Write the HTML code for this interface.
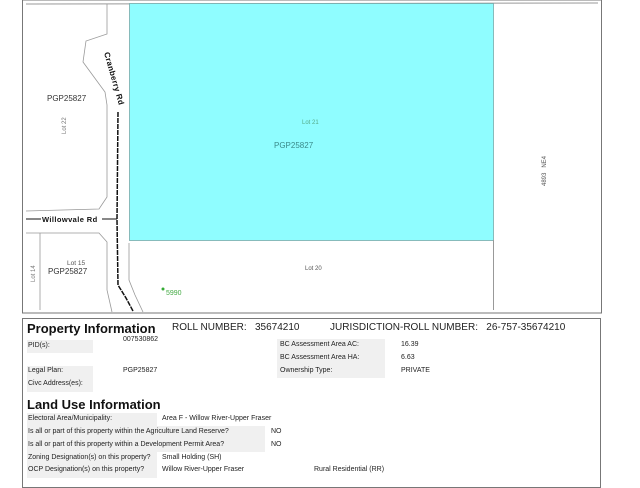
<!DOCTYPE html>
<html><head><style>
body{margin:0;width:640px;height:480px;background:#fff;position:relative;overflow:hidden;font-family:"Liberation Sans",sans-serif;}
.a{position:absolute;white-space:nowrap;font-size:7px;color:#222;}
.g{position:absolute;background:#f0f0f0;}
.h{position:absolute;font-weight:bold;font-size:13px;color:#111;}
.r{position:absolute;font-size:10px;color:#222;white-space:nowrap;}
</style></head><body>
<svg width="640" height="320" style="position:absolute;left:0;top:0" font-family="Liberation Sans, sans-serif">
<rect x="22.5" y="0" width="579" height="313" fill="#fff" stroke="#777" stroke-width="1"/>
<line x1="26" y1="4" x2="598" y2="3" stroke="#999" stroke-width="1"/>
<rect x="129.5" y="3.5" width="364" height="237" fill="#8ffdff" stroke="#7aa" stroke-width="0.8"/>
<line x1="493.5" y1="240" x2="493.5" y2="310" stroke="#999"/>
<polyline points="107,4 107,34 86,41 83,62 105,92 107,105 107,197 99,209 26,211" fill="none" stroke="#999" stroke-width="0.8"/>
<polyline points="26,233 99,233 107,242 107,290 112,312" fill="none" stroke="#999" stroke-width="0.8"/>
<polyline points="40,233 40,310" fill="none" stroke="#999" stroke-width="0.8"/>
<polyline points="129,243 129,280 135,295 143,312" fill="none" stroke="#999" stroke-width="0.8"/>
<polyline points="118,112 117,220 118,285 126,298 133,311" fill="none" stroke="#111" stroke-width="1.5" stroke-dasharray="5,1"/>
<line x1="26" y1="219" x2="41" y2="219" stroke="#111" stroke-width="1"/>
<line x1="102" y1="219" x2="117" y2="219" stroke="#111" stroke-width="1"/>
<text x="42" y="222" font-size="7.5" font-weight="bold" fill="#111" letter-spacing="0.4">Willowvale Rd</text>
<text x="0" y="0" font-size="8" font-weight="bold" fill="#111" letter-spacing="0.3" transform="translate(104,53) rotate(74)">Cranberry Rd</text>
<text x="47" y="101" font-size="8" fill="#333">PGP25827</text>
<text x="0" y="0" font-size="6" fill="#777" transform="translate(66,134) rotate(-90)">Lot 22</text>
<text x="302" y="124" font-size="6" fill="#5a8">Lot 21</text>
<text x="274" y="148" font-size="8" fill="#3a8a8a">PGP25827</text>
<text x="67" y="265" font-size="6.5" fill="#555">Lot 15</text>
<text x="48" y="274" font-size="8" fill="#333">PGP25827</text>
<text x="0" y="0" font-size="6" fill="#777" transform="translate(35,282) rotate(-90)">Lot 14</text>
<text x="305" y="270" font-size="6" fill="#555">Lot 20</text>
<circle cx="163" cy="289" r="1.5" fill="#3a3"/>
<text x="166" y="295" font-size="7" fill="#4a4">5990</text>
<text x="0" y="0" font-size="6" fill="#555" transform="translate(546,186) rotate(-90)">4893&#160;&#160;&#160;NE4</text>
</svg>
<div style="position:absolute;left:22px;top:318px;width:579px;height:170px;border:1px solid #777;box-sizing:border-box"></div>
<div class="h" style="left:27px;top:321px;">Property Information</div>
<div class="r" style="left:172px;top:322px;">ROLL NUMBER:&nbsp;&nbsp; 35674210</div>
<div class="r" style="left:330px;top:322px;">JURISDICTION-ROLL NUMBER:&nbsp;&nbsp; 26-757-35674210</div>
<div class="g" style="left:27px;top:340px;width:66px;height:13px"></div>
<div class="g" style="left:277px;top:339px;width:108px;height:26px"></div>
<div class="g" style="left:277px;top:365px;width:108px;height:13px"></div>
<div class="g" style="left:27px;top:366px;width:66px;height:26px"></div>
<div class="a" style="left:28px;top:342px">PID(s):</div>
<div class="a" style="left:123px;top:336px">007530862</div>
<div class="a" style="left:280px;top:341px">BC Assessment Area AC:</div>
<div class="a" style="left:401px;top:341px">16.39</div>
<div class="a" style="left:280px;top:354px">BC Assessment Area HA:</div>
<div class="a" style="left:401px;top:354px">6.63</div>
<div class="a" style="left:28px;top:367px">Legal Plan:</div>
<div class="a" style="left:123px;top:367px">PGP25827</div>
<div class="a" style="left:280px;top:367px">Ownership Type:</div>
<div class="a" style="left:401px;top:367px">PRIVATE</div>
<div class="a" style="left:28px;top:380px">Civc Address(es):</div>
<div class="h" style="left:27px;top:397px;">Land Use Information</div>
<div class="g" style="left:27px;top:413px;width:130px;height:13px"></div>
<div class="g" style="left:27px;top:426px;width:238px;height:26px"></div>
<div class="g" style="left:27px;top:452px;width:130px;height:26px"></div>
<div class="a" style="left:28px;top:415px">Electoral Area/Municipality:</div>
<div class="a" style="left:162px;top:415px">Area F - Willow River-Upper Fraser</div>
<div class="a" style="left:28px;top:428px">Is all or part of this property within the Agriculture Land Reserve?</div>
<div class="a" style="left:271px;top:428px">NO</div>
<div class="a" style="left:28px;top:441px">Is all or part of this property within a Development Permit Area?</div>
<div class="a" style="left:271px;top:441px">NO</div>
<div class="a" style="left:28px;top:454px">Zoning Designation(s) on this property?</div>
<div class="a" style="left:162px;top:454px">Small Holding (SH)</div>
<div class="a" style="left:28px;top:466px">OCP Designation(s) on this property?</div>
<div class="a" style="left:162px;top:466px">Willow River-Upper Fraser</div>
<div class="a" style="left:314px;top:466px">Rural Residential (RR)</div>
</body></html>
